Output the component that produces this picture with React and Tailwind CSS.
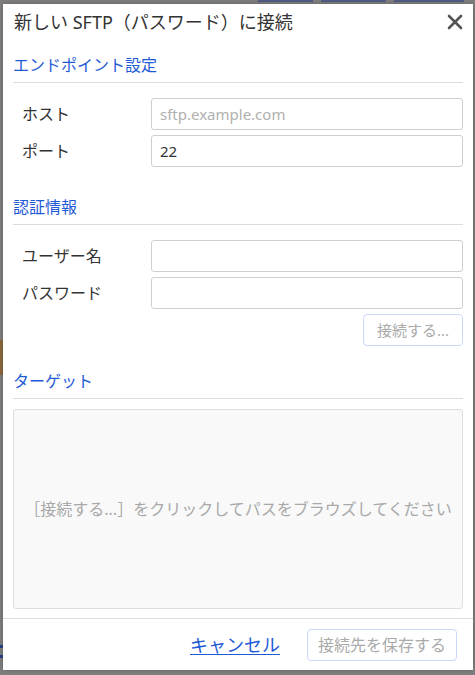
import { X } from "lucide-react";

const fontStack = "font-['Noto_Sans','Noto_Sans_CJK_JP',sans-serif]";

const SectionHeading = ({ children, className = "" }) => (
  <div
    className={`border-b border-[#dcdcdc] pb-[5px] text-[16px] leading-[24px] text-[#1f5bd6] ${className}`}
  >
    {children}
  </div>
);

const FieldRow = ({ label, placeholder, value }) => (
  <div className="flex items-center">
    <label className="w-[138px] shrink-0 pl-[9px] text-[16px] leading-[24px] text-[#333]">
      {label}
    </label>
    <input
      type="text"
      placeholder={placeholder}
      defaultValue={value}
      className="h-[32px] flex-1 rounded-[3px] border border-[#cfcfcf] bg-white px-[8px] text-[15px] text-[#333] placeholder:text-[#b0b0b0] outline-none"
    />
  </div>
);

export default function App() {
  return (
    <div className={`relative h-[675px] w-[475px] overflow-hidden bg-[#808080] ${fontStack}`}>
      {/* dimmed page behind the modal */}
      <div className="absolute left-[258px] top-0 flex gap-[8px] opacity-60">
        <div className="h-[2px] w-[55px] bg-[#34468a]" />
        <div className="h-[2px] w-[65px] bg-[#34468a]" />
        <div className="h-[2px] w-[70px] bg-[#34468a]" />
      </div>
      <div className="absolute left-0 top-[340px] h-[35px] w-[3px] bg-[#8c6a3c]" />
      <div className="absolute left-0 top-[645px] h-[3px] w-[3px] bg-[#2b3f86]" />
      <div className="absolute left-0 top-[655px] h-[3px] w-[3px] bg-[#2b3f86]" />

      {/* modal */}
      <div className="absolute left-[3px] top-[4px] flex h-[666px] w-[470px] flex-col bg-white shadow-[0_0_6px_rgba(0,0,0,0.25)]">
        <div className="flex h-[35px] items-center justify-between pl-[11px] pr-[6px]">
          <h1 className="text-[18px] leading-[24px] text-[#333]">
            新しい SFTP（パスワード）に接続
          </h1>
          <X className="h-[24px] w-[24px] text-[#555]" strokeWidth={2.6} />
        </div>

        <div className="flex flex-1 flex-col px-[10px]">
          <SectionHeading className="mt-[14px]">エンドポイント設定</SectionHeading>
          <div className="mt-[15px] flex flex-col gap-[5px]">
            <FieldRow label="ホスト" placeholder="sftp.example.com" />
            <FieldRow label="ポート" value="22" />
          </div>

          <SectionHeading className="mt-[28px]">認証情報</SectionHeading>
          <div className="mt-[15px] flex flex-col gap-[5px]">
            <FieldRow label="ユーザー名" />
            <FieldRow label="パスワード" />
          </div>
          <div className="mt-[5px] flex justify-end">
            <button className="h-[32px] w-[100px] rounded-[4px] border border-[#cad9f7] bg-white text-[15px] text-[#aaa]">
              接続する...
            </button>
          </div>

          <SectionHeading className="mt-[23px]">ターゲット</SectionHeading>
          <div className="mt-[10px] flex h-[200px] items-center justify-center rounded-[3px] border border-[#dedede] bg-[#f9f9f9] text-[16px] text-[#a8a8a8]">
            ［接続する...］をクリックしてパスをブラウズしてください
          </div>
        </div>

        <div className="flex h-[52px] items-center justify-end gap-[27px] border-t border-[#dcdcdc] pr-[16px]">
          <a href="#" className="text-[18px] leading-[24px] text-[#1f5bd6] underline underline-offset-[2px]">
            キャンセル
          </a>
          <button className="h-[32px] w-[150px] rounded-[4px] border border-[#cad9f7] bg-white text-[16px] text-[#aaa]">
            接続先を保存する
          </button>
        </div>
      </div>
    </div>
  );
}
